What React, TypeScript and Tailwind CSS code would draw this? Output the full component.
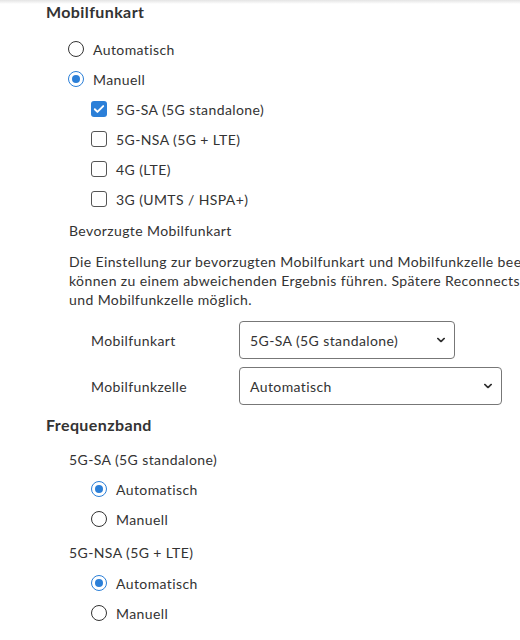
const Radio = ({ checked, label }: { checked?: boolean; label: string }) => (
    <label className="flex items-center gap-[9px] h-[30px]">
        {checked ? (
            <span className="w-[16px] h-[16px] rounded-full border-[1.5px] border-[#2b7fd8] flex items-center justify-center">
                <span className="w-[8px] h-[8px] rounded-full bg-[#2b7fd8]" />
            </span>
        ) : (
            <span className="w-[16px] h-[16px] rounded-full border-[1.5px] border-[#333]" />
        )}
        <span>{label}</span>
    </label>
);

const Check = ({ checked, label }: { checked?: boolean; label: string }) => (
    <label className="flex items-center gap-[9px] h-[30px]">
        {checked ? (
            <span className="w-[16px] h-[16px] rounded-[3px] bg-[#2b7fd8] flex items-center justify-center">
                <svg viewBox="0 0 16 16" className="w-[14px] h-[14px]">
                    <path d="M3.2 8.3l3 3 6.6-6.6" fill="none" stroke="#fff" strokeWidth="2.2" strokeLinecap="round" strokeLinejoin="round" />
                </svg>
            </span>
        ) : (
            <span className="w-[16px] h-[16px] rounded-[3px] border-[1.5px] border-[#555]" />
        )}
        <span>{label}</span>
    </label>
);

const Select = ({ value, width }: { value: string; width: string }) => (
    <div className={`relative ${width} h-[38px] border border-[#777] rounded-[4px] flex items-center px-[10px] bg-white`}>
        <span>{value}</span>
        <svg viewBox="0 0 10 6" className="absolute right-[9px] top-1/2 -translate-y-1/2 w-[8px] h-[5px]">
            <path d="M1 1l4 4 4-4" fill="none" stroke="#333" strokeWidth="2" strokeLinecap="round" strokeLinejoin="round" />
        </svg>
    </div>
);

export default function App() {
    return (
        <div className="w-[520px] h-[640px] overflow-hidden bg-white text-[#333] text-[14px] tracking-[0.4px] font-['Lato',sans-serif]">
            <div className="h-[4px] bg-gradient-to-b from-[#e4e4e4] to-white" />
            <div className="pl-[46px] w-[900px]">
                <h2 className="text-[16px] font-bold leading-[20px] mt-[-2px]">Mobilfunkart</h2>
                <div className="pl-[22px] mt-[12px]">
                    <Radio label="Automatisch" />
                    <Radio checked label="Manuell" />
                    <div className="pl-[23px]">
                        <Check checked label="5G-SA (5G standalone)" />
                        <Check label="5G-NSA (5G + LTE)" />
                        <Check label="4G (LTE)" />
                        <Check label="3G (UMTS / HSPA+)" />
                    </div>
                </div>
                <div className="pl-[23px] mt-[7px]">
                    <p className="leading-[20px]">Bevorzugte Mobilfunkart</p>
                    <p className="leading-[19px] mt-[11px] whitespace-nowrap">
                        Die Einstellung zur bevorzugten Mobilfunkart und Mobilfunkzelle beeinflusst den Verbindungsaufbau. Abweichende Netzgegebenheiten
                        <br />
                        können zu einem abweichenden Ergebnis führen. Spätere Reconnects sind jederzeit mit einer anderen Mobilfunkart
                        <br />
                        und Mobilfunkzelle möglich.
                    </p>
                    <div className="pl-[22px] mt-[12px] flex flex-col gap-[8px]">
                        <div className="flex items-center">
                            <span className="w-[148px]">Mobilfunkart</span>
                            <Select value="5G-SA (5G standalone)" width="w-[216px]" />
                        </div>
                        <div className="flex items-center">
                            <span className="w-[148px]">Mobilfunkzelle</span>
                            <Select value="Automatisch" width="w-[263px]" />
                        </div>
                    </div>
                </div>
                <h2 className="text-[16px] font-bold leading-[20px] mt-[10px]">Frequenzband</h2>
                <div className="pl-[23px] mt-[15px]">
                    <p className="leading-[20px]">5G-SA (5G standalone)</p>
                    <div className="pl-[22px] mt-[4px]">
                        <Radio checked label="Automatisch" />
                        <Radio label="Manuell" />
                    </div>
                    <p className="leading-[20px] mt-[9px]">5G-NSA (5G + LTE)</p>
                    <div className="pl-[22px] mt-[5px]">
                        <Radio checked label="Automatisch" />
                        <Radio label="Manuell" />
                    </div>
                </div>
            </div>
        </div>
    );
}
